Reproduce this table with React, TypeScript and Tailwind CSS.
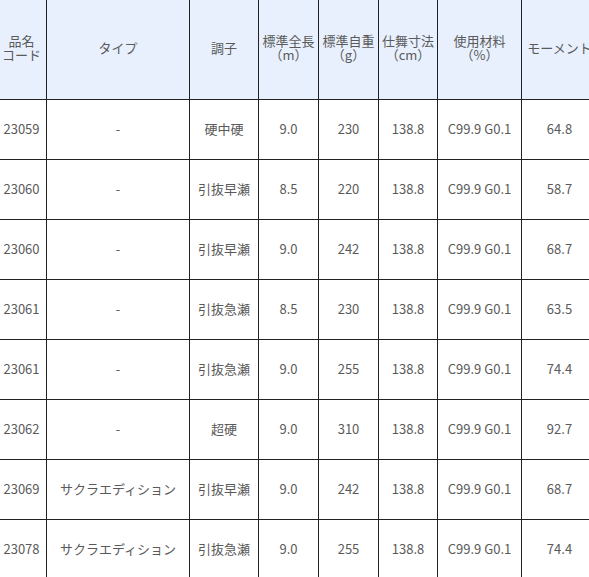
const rows = [
  ["23059", "-", "硬中硬", "9.0", "230", "138.8", "C99.9 G0.1", "64.8"],
  ["23060", "-", "引抜早瀬", "8.5", "220", "138.8", "C99.9 G0.1", "58.7"],
  ["23060", "-", "引抜早瀬", "9.0", "242", "138.8", "C99.9 G0.1", "68.7"],
  ["23061", "-", "引抜急瀬", "8.5", "230", "138.8", "C99.9 G0.1", "63.5"],
  ["23061", "-", "引抜急瀬", "9.0", "255", "138.8", "C99.9 G0.1", "74.4"],
  ["23062", "-", "超硬", "9.0", "310", "138.8", "C99.9 G0.1", "92.7"],
  ["23069", "サクラエディション", "引抜早瀬", "9.0", "242", "138.8", "C99.9 G0.1", "68.7"],
  ["23078", "サクラエディション", "引抜急瀬", "9.0", "255", "138.8", "C99.9 G0.1", "74.4"],
];

const headers = [
  ["品名", "コード"],
  ["タイプ"],
  ["調子"],
  ["標準全長", "（m）"],
  ["標準自重", "（g）"],
  ["仕舞寸法", "（cm）"],
  ["使用材料", "（%）"],
  ["モーメント"],
];

const widths = [50, 143, 69, 60, 60, 59, 84, 76];

export default function App() {
  return (
    <div className="w-[589px] h-[577px] overflow-hidden bg-white">
      <table
        className="table-fixed border-collapse -mt-[4px] -ml-[4px] text-[13px] text-[#5a5a5a] whitespace-nowrap"
        style={{ width: widths.reduce((a, b) => a + b, 0), fontFamily: '"Noto Sans CJK JP", "Noto Sans", sans-serif' }}
      >
        <colgroup>
          {widths.map((w, i) => (
            <col key={i} style={{ width: w }} />
          ))}
        </colgroup>
        <thead>
          <tr className="h-[103px] bg-[#e8f0fd]">
            {headers.map((h, i) => (
              <th key={i} className="border border-[#222] font-normal text-center align-middle leading-[14px] p-0">
                {h.map((line, j) => (
                  <div key={j}>{line}</div>
                ))}
              </th>
            ))}
          </tr>
        </thead>
        <tbody>
          {rows.map((r, i) => (
            <tr key={i} className="h-[60px]">
              {r.map((c, j) => (
                <td key={j} className="border border-[#222] text-center align-middle p-0 pb-[2px]">
                  {c}
                </td>
              ))}
            </tr>
          ))}
        </tbody>
      </table>
    </div>
  );
}
